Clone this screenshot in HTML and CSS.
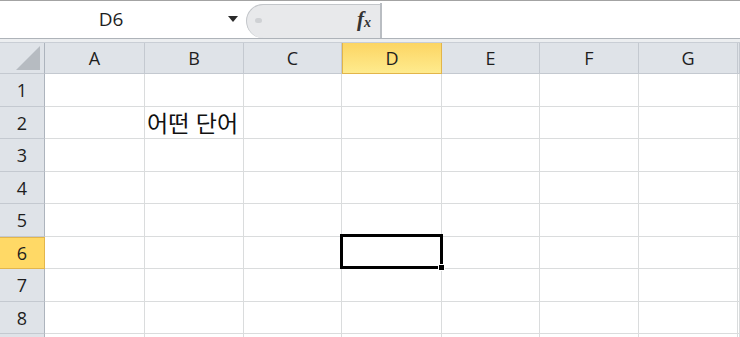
FILE: index.html
```html
<!DOCTYPE html>
<html lang="ko">
<head>
    <meta charset="UTF-8">
    <title>Sheet1</title>
    <link rel="stylesheet" href="styles.css">
</head>
<body>
    <div class="formula-bar">
        <div class="name-box">
            <span class="name-text">D6</span>
            <span class="drop-arrow"></span>
        </div>
        <div class="fx-pill">
            <span class="pill-dot"></span>
            <span class="fx">f<sub>x</sub></span>
        </div>
        <div class="formula-input"></div>
    </div>
    <div class="gap"></div>

    <div class="sheet">
        <div class="row head-row">
            <div class="corner"><span class="corner-tri"></span></div>
            <div class="cell col-a col-head">A</div>
            <div class="cell col-b col-head">B</div>
            <div class="cell col-c col-head">C</div>
            <div class="cell col-d col-head active">D</div>
            <div class="cell col-e col-head">E</div>
            <div class="cell col-f col-head">F</div>
            <div class="cell col-g col-head">G</div>
            <div class="cell col-rest col-head"></div>
        </div>
        <div class="row tall">
            <div class="row-head">1</div>
            <div class="cell col-a"></div><div class="cell col-b"></div><div class="cell col-c"></div><div class="cell col-d"></div>
            <div class="cell col-e"></div><div class="cell col-f"></div><div class="cell col-g"></div><div class="cell col-rest"></div>
        </div>
        <div class="row">
            <div class="row-head">2</div>
            <div class="cell col-a"></div><div class="cell col-b text-cell">어떤 단어</div><div class="cell col-c"></div><div class="cell col-d"></div>
            <div class="cell col-e"></div><div class="cell col-f"></div><div class="cell col-g"></div><div class="cell col-rest"></div>
        </div>
        <div class="row tall">
            <div class="row-head">3</div>
            <div class="cell col-a"></div><div class="cell col-b"></div><div class="cell col-c"></div><div class="cell col-d"></div>
            <div class="cell col-e"></div><div class="cell col-f"></div><div class="cell col-g"></div><div class="cell col-rest"></div>
        </div>
        <div class="row">
            <div class="row-head">4</div>
            <div class="cell col-a"></div><div class="cell col-b"></div><div class="cell col-c"></div><div class="cell col-d"></div>
            <div class="cell col-e"></div><div class="cell col-f"></div><div class="cell col-g"></div><div class="cell col-rest"></div>
        </div>
        <div class="row tall">
            <div class="row-head">5</div>
            <div class="cell col-a"></div><div class="cell col-b"></div><div class="cell col-c"></div><div class="cell col-d"></div>
            <div class="cell col-e"></div><div class="cell col-f"></div><div class="cell col-g"></div><div class="cell col-rest"></div>
        </div>
        <div class="row">
            <div class="row-head active">6</div>
            <div class="cell col-a"></div><div class="cell col-b"></div><div class="cell col-c"></div><div class="cell col-d selected"></div>
            <div class="cell col-e"></div><div class="cell col-f"></div><div class="cell col-g"></div><div class="cell col-rest"></div>
        </div>
        <div class="row tall">
            <div class="row-head">7</div>
            <div class="cell col-a"></div><div class="cell col-b"></div><div class="cell col-c"></div><div class="cell col-d"></div>
            <div class="cell col-e"></div><div class="cell col-f"></div><div class="cell col-g"></div><div class="cell col-rest"></div>
        </div>
        <div class="row">
            <div class="row-head">8</div>
            <div class="cell col-a"></div><div class="cell col-b"></div><div class="cell col-c"></div><div class="cell col-d"></div>
            <div class="cell col-e"></div><div class="cell col-f"></div><div class="cell col-g"></div><div class="cell col-rest"></div>
        </div>
        <div class="row tall">
            <div class="row-head"></div>
            <div class="cell col-a"></div><div class="cell col-b"></div><div class="cell col-c"></div><div class="cell col-d"></div>
            <div class="cell col-e"></div><div class="cell col-f"></div><div class="cell col-g"></div><div class="cell col-rest"></div>
        </div>
    </div>
</body>
</html>
```

FILE: styles.css
```css
body {
    margin: 0;
    width: 740px;
    height: 337px;
    overflow: hidden;
    background-color: #ffffff;
    font-family: 'Open Sans', 'Noto Sans CJK KR', sans-serif;
    color: #1e1e1e;
}

/* formula bar */
.formula-bar {
    display: flex;
    height: 39px;
    border-top: 1px solid #a3a3a3;
    border-bottom: 1px solid #aeb3b9;
    background-color: #ffffff;
    box-sizing: border-box;
}
.name-box {
    width: 246px;
    display: flex;
    align-items: center;
}
.name-text {
    width: 222px;
    text-align: center;
    font-size: 19px;
    line-height: 1;
    margin-top: -1px;
}
.drop-arrow {
    width: 0;
    height: 0;
    border-left: 5px solid transparent;
    border-right: 5px solid transparent;
    border-top: 6px solid #2b2b2b;
    margin-left: 6px;
    margin-top: -2px;
}
.fx-pill {
    width: 134px;
    margin-top: 3px;
    background-color: #e8e9eb;
    border: 1px solid #c3c6ca;
    border-right: none;
    border-bottom: none;
    border-radius: 17px 0 0 17px;
    display: flex;
    align-items: center;
    justify-content: space-between;
    padding: 0 9px 0 8px;
    box-sizing: border-box;
}
.pill-dot {
    width: 7px;
    height: 5px;
    border-radius: 3px;
    background-color: #cfd1d4;
    margin-top: -2px;
}
.fx {
    font-family: 'Liberation Serif', serif;
    font-style: italic;
    font-weight: bold;
    font-size: 21px;
    line-height: 1;
    color: #333333;
    margin-top: -4px;
}
.fx sub {
    font-size: 14px;
    vertical-align: -1px;
}
.formula-input {
    flex: 1;
    border-left: 2px solid #b9bdc2;
    margin-top: 2px;
}
.gap {
    height: 3px;
    background-color: #eceef0;
}

/* sheet grid */
.sheet {
    font-size: 18px;
}
.row {
    display: flex;
    height: 32px;
    box-sizing: border-box;
}
.row.tall {
    height: 33px;
}
.head-row {
    height: 32px;
    border-top: 1px solid #c9ced5;
}
.cell {
    box-sizing: border-box;
    border-right: 1px solid #dadcdd;
    border-bottom: 1px solid #dadcdd;
    height: 100%;
}
.col-a { width: 100px; }
.col-b { width: 99px; }
.col-c { width: 98px; }
.col-d { width: 100px; }
.col-e { width: 98px; }
.col-f { width: 99px; }
.col-g { width: 99px; }
.col-rest { flex: 1; }

.corner,
.row-head,
.col-head {
    background-color: #dfe3e8;
    box-sizing: border-box;
    border-right: 1px solid #c4c9d0;
    border-bottom: 1px solid #c4c9d0;
    display: flex;
    align-items: center;
    justify-content: center;
    color: #1e1e1e;
}
.corner,
.row-head {
    width: 45px;
    border-right: 1px solid #adb4bd;
}
.corner {
    align-items: flex-end;
    justify-content: flex-end;
    padding: 0 4px 3px 0;
}
.corner-tri {
    width: 0;
    height: 0;
    border-left: 24px solid transparent;
    border-bottom: 24px solid #b6bbc1;
}
.col-head.active {
    background: linear-gradient(#fcd563, #feeb8e);
    border: 1px solid #e2b54a;
    border-top: none;
}
.row-head.active {
    background-color: #ffd966;
    border-top: 1px solid #e3b64b;
    border-bottom: 1px solid #e3b64b;
    border-right: 1px solid #e3b64b;
}

.text-cell {
    font-family: 'Noto Sans CJK KR', sans-serif;
    font-size: 23px;
    line-height: 1;
    color: #111111;
    padding: 4px 0 0 2px;
    white-space: nowrap;
    overflow: visible;
}

.selected {
    position: relative;
}
.selected::before {
    content: "";
    position: absolute;
    left: -2px;
    top: -3px;
    right: -2px;
    bottom: -1px;
    border: 3px solid #000000;
}
.selected::after {
    content: "";
    position: absolute;
    right: -4px;
    bottom: -3px;
    width: 5px;
    height: 5px;
    background-color: #000000;
    border: 1px solid #ffffff;
}
```
